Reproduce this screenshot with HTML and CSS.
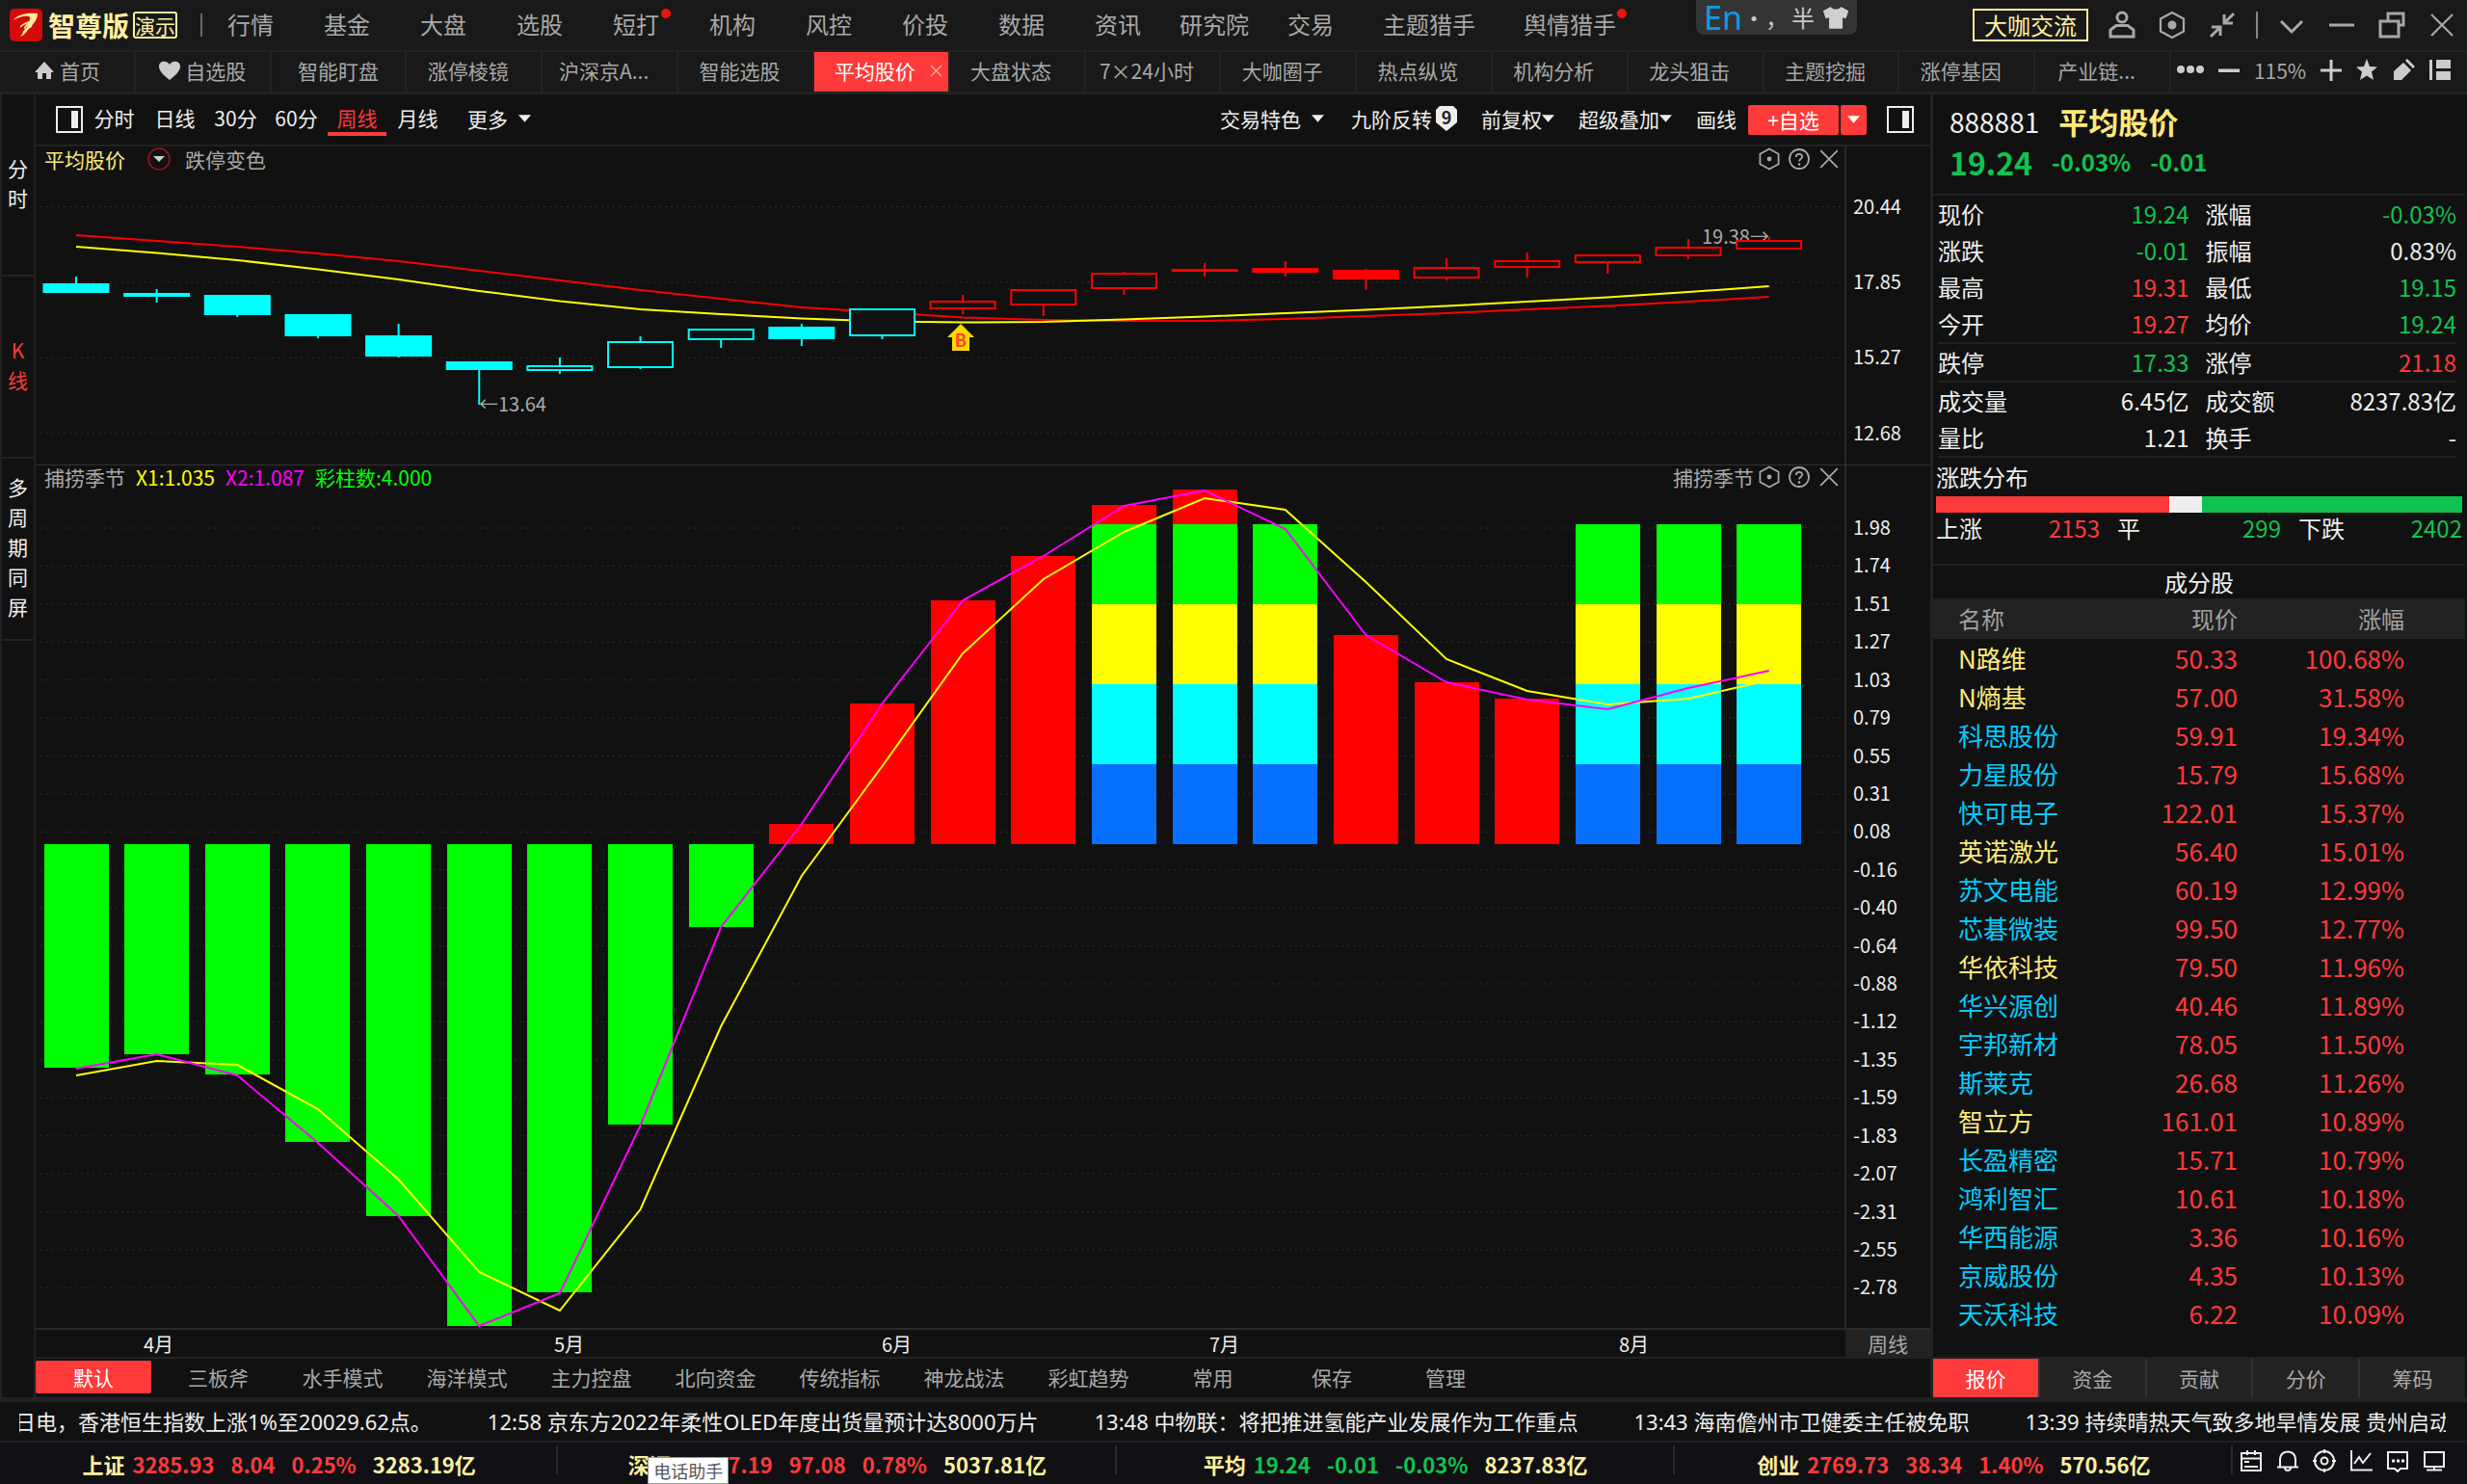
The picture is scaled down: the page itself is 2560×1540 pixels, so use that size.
FILE: index.html
```html
<!DOCTYPE html>
<html lang="zh-CN">
<head>
  <meta charset="UTF-8">
  <meta name="viewport" content="width=device-width, initial-scale=1.0">
  <title>智尊版 - 平均股价</title>
  <link rel="stylesheet" href="styles.css">
</head>
<body>
  <!-- shared icons -->
  <svg class="sprite" aria-hidden="true">
    <symbol id="i-hex" viewBox="0 0 30 30"><path d="M15 2 27 8.500V21.500L15 28 3 21.500V8.500Z" fill="none" stroke="currentColor" stroke-width="2.200"/><circle cx="15" cy="15" r="3" fill="currentColor"/></symbol>
    <symbol id="i-close" viewBox="0 0 30 30"><path d="M4 4 26 26M26 4 4 26" fill="none" stroke="currentColor" stroke-width="2.200"/></symbol>
    <symbol id="i-help" viewBox="0 0 30 30"><circle cx="15" cy="15" r="12.500" fill="none" stroke="currentColor" stroke-width="2.200"/><path d="M11 12.500c0-5 8-5 8-.5 0 3-4 3-4 6" fill="none" stroke="currentColor" stroke-width="2.200"/><circle cx="15" cy="22" r="1.600" fill="currentColor"/></symbol>
    <symbol id="i-panel" viewBox="0 0 28 28"><path d="M1 1H27V27H1Z" fill="none" stroke="currentColor" stroke-width="2"/><path d="M16 5h7v18h-7z" fill="currentColor"/></symbol>
    <symbol id="i-caret" viewBox="0 0 14 8"><path d="M0 0H14L7 8Z" fill="currentColor"/></symbol>
  </svg>

  <header class="topbar">
    <div class="brand">
      <svg class="logo" viewBox="0 0 34 34"><rect width="34" height="34" rx="5" fill="#d30b0b"/><path d="M4 12C8 6 17 4 29 5 29 11 25 16 19 22 17 25 14 28 11 29 14 25 18 20 20 14 21 11 22 9 20 8 15 7 9 9 4 12Z" fill="#ffeb9c"/><path d="M11 19c3-3 6-5 11-5-5 3-7 5-6 7M14 25c2-3 5-5 9-7" fill="none" stroke="#ffeb9c" stroke-width="1.500"/></svg>
      <span class="brand-name">智尊版</span>
      <span class="brand-tag">演示</span>
    </div>
    <nav class="nav">
      <a href="#">行情</a><a href="#">基金</a><a href="#">大盘</a><a href="#">选股</a><a href="#" class="has-dot">短打</a><a href="#">机构</a><a href="#">风控</a><a href="#">价投</a><a href="#">数据</a><a href="#">资讯</a><a href="#">研究院</a><a href="#">交易</a><a href="#">主题猎手</a><a href="#" class="has-dot">舆情猎手</a>
    </nav>
    <div class="ime">
      <span class="ime-lang">En</span><span class="ime-punct">·，</span><span>半</span>
      <svg viewBox="0 0 32 28"><path d="M10 1c2 4 10 4 12 0l9 5-3 9-4-1v13H8V14l-4 1L1 6Z" fill="#d0d0d0"/></svg>
    </div>
    <div class="window-tools">
      <button class="vip">大咖交流</button>
      <button class="win" aria-label="用户"><svg viewBox="0 0 30 30"><circle cx="15" cy="7" r="5"/><path d="M3 27V20L9 15.500H21L27 20V27Z"/></svg></button>
      <button class="win" aria-label="设置"><svg><use href="#i-hex"/></svg></button>
      <button class="win" aria-label="收起"><svg viewBox="0 0 30 30"><path d="M27 3 18 12M17 4v9h9M3 27l9-9M4 17h9v9"/></svg></button>
      <span class="win-line"></span>
      <button class="win" aria-label="展开"><svg viewBox="0 0 30 30"><path d="M4 11 15 22 26 11"/></svg></button>
      <button class="win" aria-label="最小化"><svg viewBox="0 0 30 30"><path d="M2 15H28" stroke-width="3"/></svg></button>
      <button class="win" aria-label="还原"><svg viewBox="0 0 30 30"><path d="M3 11H22V27H3ZM11 10V3H27V15H23"/></svg></button>
      <button class="win" aria-label="关闭"><svg><use href="#i-close"/></svg></button>
    </div>
  </header>

  <div class="tabbar">
    <nav class="tabs">
      <a href="#"><svg class="tab-icon" viewBox="0 0 22 20"><path d="M11 1 21 12H18V19H13V13H9V19H4V12H1Z"/></svg>首页</a>
      <a href="#"><svg class="tab-icon" viewBox="0 0 22 20"><path d="M11 20C5 15 0 11 0 6 0 0 8-1 11 4 14-1 22 0 22 6 22 11 17 15 11 20Z"/></svg>自选股</a>
      <a href="#">智能盯盘</a>
      <a href="#">涨停棱镜</a>
      <a href="#">沪深京A...</a>
      <a href="#">智能选股</a>
      <a href="#" class="active">平均股价<svg class="tab-close"><use href="#i-close"/></svg></a>
      <a href="#">大盘状态</a>
      <a href="#">7×24小时</a>
      <a href="#">大咖圈子</a>
      <a href="#">热点纵览</a>
      <a href="#">机构分析</a>
      <a href="#">龙头狙击</a>
      <a href="#">主题挖掘</a>
      <a href="#">涨停基因</a>
      <a href="#">产业链...</a>
    </nav>
    <div class="tab-tools">
      <button aria-label="更多"><svg viewBox="0 0 30 24"><circle cx="5" cy="11" r="4"/><circle cx="15" cy="11" r="4"/><circle cx="25" cy="11" r="4"/></svg></button>
      <button aria-label="缩小"><svg viewBox="0 0 22 24"><path d="M0 10.500h22v3.500H0z"/></svg></button>
      <span>115%</span>
      <button aria-label="放大"><svg viewBox="0 0 22 24"><path d="M0 10.500h9.500V1h3v9.500H22v3H12.500V23h-3V13.500H0z"/></svg></button>
      <button aria-label="收藏"><svg viewBox="0 0 24 24"><path d="M12 0 15 8 23 8.500 17 13.500 19 22 12 17.500 5 22 7 13.500 1 8.500 9 8Z"/></svg></button>
      <button aria-label="画笔"><svg viewBox="0 0 24 24"><path d="M1 22V13L11 4 19 12 9 22ZM13 2 15 0 23 8 21 10Z"/></svg></button>
      <button aria-label="布局"><svg viewBox="0 0 22 24"><path d="M0 1h3v21H0zM7 1h15v9H7zM7 13h15v9H7z"/></svg></button>
    </div>
  </div>

  <main class="workspace">
    <aside class="side">
      <a href="#">分时</a>
      <a href="#" class="active">K线</a>
      <a href="#">多周期同屏</a>
    </aside>

    <section class="charts">
      <div class="toolbar">
        <button class="panel-toggle" aria-label="左侧栏"><svg><use href="#i-panel"/></svg></button>
        <div class="periods">
          <button>分时</button><button>日线</button><button>30分</button><button>60分</button><button class="active">周线</button><button>月线</button>
        </div>
        <button class="more">更多<svg class="caret"><use href="#i-caret"/></svg></button>
        <div class="chart-actions">
          <button class="wide">交易特色<svg class="caret"><use href="#i-caret"/></svg></button>
          <button>九阶反转<svg class="shield" viewBox="0 0 22 26"><path d="M4 0H18L22 4V17L11 26 0 17V4Z" fill="#eee"/><text x="11" y="19" text-anchor="middle">9</text></svg></button>
          <button>前复权<svg class="caret"><use href="#i-caret"/></svg></button>
          <button>超级叠加<svg class="caret"><use href="#i-caret"/></svg></button>
          <button>画线</button>
        </div>
        <div class="add-group">
          <button class="add">+自选</button><button class="add-more" aria-label="选择分组"><svg class="caret"><use href="#i-caret"/></svg></button>
        </div>
        <button class="panel-toggle" aria-label="右侧栏"><svg><use href="#i-panel"/></svg></button>
      </div>

      <div class="panel">
        <svg class="plot" id="priceChart" viewBox="37 152 1966 330"></svg>
        <div class="panel-head">
          <span class="c-name">平均股价</span>
          <button class="drop" aria-label="切换"><svg viewBox="0 0 24 24"><circle cx="12" cy="12" r="11" fill="none" stroke="#a31414" stroke-width="1.500"/><path d="M6 9H18L12 15Z" fill="#ccc"/></svg></button>
          <span>跌停变色</span>
          <span class="panel-tools"><button aria-label="设置"><svg><use href="#i-hex"/></svg></button><button aria-label="帮助"><svg><use href="#i-help"/></svg></button><button aria-label="关闭"><svg><use href="#i-close"/></svg></button></span>
        </div>
      </div>

      <div class="panel indicator">
        <svg class="plot" id="indicatorChart" viewBox="37 483 1966 895"></svg>
        <div class="panel-head">
          <span>捕捞季节</span>
          <span class="c-x1">X1:1.035</span>
          <span class="c-x2">X2:1.087</span>
          <span class="c-num">彩柱数:4.000</span>
          <span class="panel-tools">捕捞季节<button aria-label="设置"><svg><use href="#i-hex"/></svg></button><button aria-label="帮助"><svg><use href="#i-help"/></svg></button><button aria-label="关闭"><svg><use href="#i-close"/></svg></button></span>
        </div>
      </div>

      <div class="dates">
        <svg id="dateAxis" viewBox="37 1380 1878 28"></svg>
        <span class="cycle">周线</span>
      </div>

      <nav class="modes">
        <a href="#" class="active">默认</a><a href="#">三板斧</a><a href="#">水手模式</a><a href="#">海洋模式</a><a href="#">主力控盘</a><a href="#">北向资金</a><a href="#">传统指标</a><a href="#">神龙战法</a><a href="#">彩虹趋势</a><a href="#">常用</a><a href="#" class="short">保存</a><a href="#" class="short">管理</a>
      </nav>
    </section>

    <section class="quote">
      <div class="quote-head">
        <div class="quote-title"><span>888881</span><h1>平均股价</h1></div>
        <div class="quote-price down"><strong>19.24</strong><b>-0.03%</b><b>-0.01</b></div>
      </div>
      <dl class="facts">
        <div><dt>现价</dt><dd class="down">19.24</dd></div><div><dt>涨幅</dt><dd class="down">-0.03%</dd></div>
        <div><dt>涨跌</dt><dd class="down">-0.01</dd></div><div><dt>振幅</dt><dd>0.83%</dd></div>
        <div><dt>最高</dt><dd class="up">19.31</dd></div><div><dt>最低</dt><dd class="down">19.15</dd></div>
        <div><dt>今开</dt><dd class="up">19.27</dd></div><div><dt>均价</dt><dd class="down">19.24</dd></div>
      </dl>
      <dl class="facts">
        <div><dt>跌停</dt><dd class="down">17.33</dd></div><div><dt>涨停</dt><dd class="up">21.18</dd></div>
      </dl>
      <dl class="facts">
        <div><dt>成交量</dt><dd>6.45亿</dd></div><div><dt>成交额</dt><dd>8237.83亿</dd></div>
        <div><dt>量比</dt><dd>1.21</dd></div><div><dt>换手</dt><dd>-</dd></div>
      </dl>
      <div class="spread">
        <h2>涨跌分布</h2>
        <div class="spread-bar"><i class="bar-up" style="flex-grow:2153"></i><i class="bar-flat" style="flex-grow:299"></i><i class="bar-down" style="flex-grow:2402"></i></div>
        <dl>
          <div><dt>上涨</dt><dd class="up">2153</dd></div>
          <div><dt>平</dt><dd class="down">299</dd></div>
          <div><dt>下跌</dt><dd class="down">2402</dd></div>
        </dl>
      </div>
      <table class="stocks">
        <caption>成分股</caption>
        <thead><tr><th>名称</th><th>现价</th><th>涨幅</th></tr></thead>
        <tbody>
          <tr><td class="hot">N路维</td><td>50.33</td><td>100.68%</td></tr>
          <tr><td class="hot">N熵基</td><td>57.00</td><td>31.58%</td></tr>
          <tr><td>科思股份</td><td>59.91</td><td>19.34%</td></tr>
          <tr><td>力星股份</td><td>15.79</td><td>15.68%</td></tr>
          <tr><td>快可电子</td><td>122.01</td><td>15.37%</td></tr>
          <tr><td class="hot">英诺激光</td><td>56.40</td><td>15.01%</td></tr>
          <tr><td>苏文电能</td><td>60.19</td><td>12.99%</td></tr>
          <tr><td>芯碁微装</td><td>99.50</td><td>12.77%</td></tr>
          <tr><td class="hot">华依科技</td><td>79.50</td><td>11.96%</td></tr>
          <tr><td>华兴源创</td><td>40.46</td><td>11.89%</td></tr>
          <tr><td>宇邦新材</td><td>78.05</td><td>11.50%</td></tr>
          <tr><td>斯莱克</td><td>26.68</td><td>11.26%</td></tr>
          <tr><td class="hot">智立方</td><td>161.01</td><td>10.89%</td></tr>
          <tr><td>长盈精密</td><td>15.71</td><td>10.79%</td></tr>
          <tr><td>鸿利智汇</td><td>10.61</td><td>10.18%</td></tr>
          <tr><td>华西能源</td><td>3.36</td><td>10.16%</td></tr>
          <tr><td>京威股份</td><td>4.35</td><td>10.13%</td></tr>
          <tr><td>天沃科技</td><td>6.22</td><td>10.09%</td></tr>
        </tbody>
      </table>
      <nav class="quote-tabs">
        <a href="#" class="active">报价</a><a href="#">资金</a><a href="#">贡献</a><a href="#">分价</a><a href="#">筹码</a>
      </nav>
    </section>
  </main>

  <div class="news">
    <div class="news-track">
      <a href="#">日电，香港恒生指数上涨1%至20029.62点。</a>
      <a href="#">12:58 京东方2022年柔性OLED年度出货量预计达8000万片</a>
      <a href="#">13:48 中物联：将把推进氢能产业发展作为工作重点</a>
      <a href="#">13:43 海南儋州市卫健委主任被免职</a>
      <a href="#">13:39 持续晴热天气致多地旱情发展 贵州启动</a>
    </div>
  </div>

  <footer class="status">
    <div class="index"><span class="idx-name">上证</span><span class="up">3285.93</span><span class="up">8.04</span><span class="up">0.25%</span><span>3283.19亿</span></div>
    <div class="index"><span class="idx-name">深证</span><span class="up">12267.19</span><span class="up">97.08</span><span class="up">0.78%</span><span>5037.81亿</span><span class="tip">电话助手</span></div>
    <div class="index"><span class="idx-name">平均</span><span class="down">19.24</span><span class="down">-0.01</span><span class="down">-0.03%</span><span>8237.83亿</span></div>
    <div class="index"><span class="idx-name">创业</span><span class="up">2769.73</span><span class="up">38.34</span><span class="up">1.40%</span><span>570.56亿</span></div>
    <div class="status-icons">
      <button aria-label="日历"><svg viewBox="0 0 24 24"><path d="M2 4H22V22H2ZM2 9.500H22M8 1V6M16 1V6M5 13H10M5 18H19"/></svg></button>
      <button aria-label="提醒"><svg viewBox="0 0 24 24"><path d="M4 18V10C4 0 20 0 20 10V18M1 18.500H23M9 19C9 23 15 23 15 19"/></svg></button>
      <button aria-label="定位"><svg viewBox="0 0 24 24"><circle cx="12" cy="12" r="10"/><circle cx="12" cy="12" r="3.500"/><path d="M12 0V4M12 20V24M0 12H4M20 12H24"/></svg></button>
      <button aria-label="走势"><svg viewBox="0 0 24 24"><path d="M2 1V21.500H24M5 15 10 8 14 14 22 4"/></svg></button>
      <button aria-label="消息"><svg viewBox="0 0 24 24"><path d="M2 3H22V20H15L12 23 9 20H2Z"/><path d="M6 12H9M11 12H14M16 12H19" stroke-width="3"/></svg></button>
      <button aria-label="屏幕"><svg viewBox="0 0 24 24"><path d="M2 3H22V18H2ZM12 18V21M4 21.500H20"/></svg></button>
    </div>
  </footer>

  <script src="script.js"></script>
</body>
</html>
```

FILE: styles.css
```css
* {
  box-sizing: border-box;
}

body {
  margin: 0;
  background-color: #111;
  color: #eee;
  font-family: "Noto Sans CJK SC", "Noto Sans", sans-serif;
  font-size: 21px;
  line-height: 30px;
  overflow: hidden;
}

a {
  color: inherit;
  text-decoration: none;
  white-space: nowrap;
}

button {
  display: flex;
  align-items: center;
  justify-content: center;
  padding: 0;
  border: 0;
  background: none;
  color: inherit;
  font: inherit;
  white-space: nowrap;
}

svg {
  display: block;
}

dl, dd, h1, h2 {
  margin: 0;
}

.sprite {
  position: absolute;
  width: 0;
  height: 0;
}

.up {
  color: #ff3a3a;
}

.down {
  color: #10c250;
}

.caret {
  width: 13px;
  height: 8px;
}

/* top bar */
.topbar {
  display: flex;
  align-items: center;
  height: 54px;
  border-bottom: 2px solid #222;
  background-color: #191919;
  color: #a8a8a8;
  font-size: 24px;
}

.brand {
  display: flex;
  align-items: center;
  width: 210px;
  padding-left: 10px;
  border-right: 2px solid #666;
  height: 24px;
  color: #fff0a0;
}

.logo {
  width: 34px;
  height: 34px;
}

.brand-name {
  margin: 0 4px 0 6px;
  font-size: 28px;
  font-weight: bold;
}

.brand-tag {
  border: 2px solid #fff0a0;
  border-radius: 3px;
  font-size: 21px;
  line-height: 24px;
}

.nav {
  display: flex;
  padding-bottom: 2px;
}

.nav a {
  position: relative;
  min-width: 100px;
  padding: 0 14px;
  text-align: center;
}

.nav a:nth-child(n+13) {
  padding: 0 25px;
}

.has-dot::after {
  content: "";
  position: absolute;
  top: -1px;
  right: 14px;
  width: 10px;
  height: 10px;
  border-radius: 50%;
  background-color: #f01010;
}

.ime {
  display: flex;
  align-items: center;
  align-self: flex-start;
  width: 167px;
  height: 36px;
  margin-left: 58px;
  padding: 0 8px;
  border-radius: 0 0 8px 8px;
  background-color: #343434;
  color: #c8c8c8;
}

.ime svg {
  width: 32px;
  margin-left: 8px;
}

.ime-lang {
  color: #0c9ce8;
  font-family: "Noto Sans", sans-serif;
  font-size: 34px;
}

.ime-punct {
  margin-right: 3px;
}

.window-tools {
  display: flex;
  align-items: center;
  margin-left: auto;
}

.vip {
  width: 120px;
  height: 34px;
  margin-right: 9px;
  border: 2px solid #fff0a0;
  color: #fff0a0;
}

.win {
  width: 52px;
  height: 40px;
}

.win svg {
  width: 30px;
  height: 30px;
  fill: none;
  stroke: currentColor;
  stroke-width: 3;
}

.win-line {
  width: 2px;
  height: 28px;
  margin: 0 9px;
  background-color: #888;
}

/* tabs */
.tabbar {
  display: flex;
  height: 44px;
  border-bottom: 3px solid #222;
  background-color: #191919;
  color: #a8a8a8;
}

.tabs {
  display: grid;
  grid-template-columns: repeat(16, 1fr);
  flex: 1;
}

.tabs a {
  display: flex;
  align-items: center;
  justify-content: center;
  padding-bottom: 3px;
  border-right: 2px solid #222;
}

.tabs a:nth-child(n+4) {
  padding-right: 12px;
}

.tabs a.active {
  justify-content: flex-start;
  gap: 14px;
  padding-left: 21px;
  padding-right: 0;
  background-color: #ff3a3a;
  color: #fff;
}

.tab-icon {
  width: 22px;
  height: 20px;
  margin-right: 5px;
  fill: #ccc;
}

.tab-close {
  width: 15px;
  height: 15px;
  color: #ffb0b0;
}

.tab-tools {
  display: flex;
  align-items: center;
  justify-content: space-between;
  width: 307px;
  padding: 0 17px 3px 5px;
}

.tab-tools svg {
  height: 24px;
  fill: #ccc;
}

/* main area */
.workspace {
  display: grid;
  grid-template-columns: 37px 1fr 554px;
  border-bottom: 5px solid #222;
}

.side {
  display: flex;
  flex-direction: column;
  border-left: 2px solid #222;
  border-right: 2px solid #222;
}

.side a {
  display: flex;
  align-items: center;
  justify-content: center;
  height: 189px;
  padding: 0 6px 4px;
  border-bottom: 2px solid #222;
  line-height: 31px;
  text-align: center;
  white-space: normal;
  word-break: break-all;
}

.side .active {
  color: #ff3a3a;
}

.charts {
  min-width: 0;
  border-right: 3px solid #222;
}

.toolbar {
  display: flex;
  align-items: center;
  height: 54px;
  padding: 0 17px 0 21px;
  border-bottom: 2px solid #222;
}

.panel-toggle svg {
  width: 28px;
  height: 28px;
}

.periods {
  display: flex;
  margin: 0 20px 0 1px;
}

.periods button {
  width: 61px;
  height: 34px;
  margin: 0 1px;
  border-bottom: 4px solid transparent;
}

.periods .active {
  border-bottom-color: #ff3a3a;
  color: #ff3a3a;
}

.more, .chart-actions button {
  padding-bottom: 2px;
}

.more, .wide {
  gap: 11px;
}

.wide {
  margin-right: 3px;
}

.chart-actions {
  display: flex;
  gap: 25px;
  margin-left: auto;
}

.shield {
  width: 22px;
  height: 26px;
  margin-left: 4px;
}

.shield text {
  fill: #222;
  font-size: 18px;
  font-weight: bold;
}

.add-group {
  display: flex;
  gap: 2px;
  margin: 0 21px 0 12px;
  color: #fff;
}

.add-group button {
  width: 94px;
  height: 31px;
  border-radius: 2px;
  background-color: #ff3a3a;
}

.add-group .add-more {
  width: 27px;
}

.panel {
  display: grid;
  color: #a8a8a8;
}

.panel > * {
  grid-area: 1 / 1;
}

.indicator {
  border-top: 1px solid #333;
}

.plot {
  width: 100%;
  height: auto;
}

.panel-head {
  display: flex;
  align-items: center;
  align-self: start;
  gap: 11px;
  height: 26px;
  margin-right: 88px;
  padding: 0 2px 0 9px;
}

.indicator .panel-head {
  height: 23px;
}

.drop {
  margin: 0 4px 0 12px;
}

.drop svg {
  width: 24px;
  height: 24px;
}

.c-name {
  color: #ffe97a;
}

.c-x1 {
  color: #ff0;
}

.c-x2 {
  color: #f0f;
}

.c-num {
  color: #0f0;
}

.panel-tools {
  display: flex;
  align-items: center;
  margin-left: auto;
}

.panel-tools button {
  width: 31px;
}

.panel-tools svg {
  width: 24px;
  height: 24px;
}

/* chart drawing */
.grid {
  stroke: #2c2c2c;
  stroke-dasharray: 2 4;
}

.axis-line {
  stroke: #2a2a2a;
  stroke-width: 2;
}

.axis-text {
  fill: #eee;
  font-size: 20px;
}

.note {
  fill: #aaa;
  font-size: 20px;
}

.line {
  fill: none;
  stroke-width: 2;
}

.dates {
  display: flex;
  border-top: 2px solid #2a2a2a;
  border-bottom: 2px solid #222;
}

.dates svg {
  flex: 1;
  min-width: 0;
}

.cycle {
  width: 88px;
  background-color: #222;
  color: #a8a8a8;
  line-height: 28px;
  text-align: center;
}

.modes {
  display: flex;
  align-items: center;
  height: 40px;
  padding-bottom: 2px;
  color: #a8a8a8;
}

.modes a {
  width: 129px;
  line-height: 34px;
  text-align: center;
}

.modes .active {
  width: 120px;
  margin-right: 5px;
  border-radius: 2px;
  background-color: #ff3a3a;
  color: #fff;
}

.modes .short {
  width: 118px;
}

/* quote panel */
.quote {
  display: flex;
  flex-direction: column;
  padding-right: 2px;
  font-size: 24px;
}

.quote-head {
  height: 105px;
  padding: 4px 0 0 17px;
  border-bottom: 2px solid #222;
}

.quote-title, .quote-price {
  display: flex;
  align-items: center;
  gap: 20px;
}

.quote-title {
  height: 48px;
  font-size: 28px;
}

.quote-title h1 {
  color: #ffe97a;
  font-size: 31px;
}

.quote-price {
  height: 36px;
}

.quote-price strong {
  font-size: 32px;
}

.facts {
  display: grid;
  grid-template-columns: 1fr 1fr;
  column-gap: 17px;
  margin: 0 9px 0 5px;
  border-bottom: 2px solid #222;
  line-height: 38px;
}

.facts div, .spread dl div {
  display: flex;
  justify-content: space-between;
}

.spread {
  height: 112px;
  padding: 2px 3px 0;
  border-bottom: 2px solid #222;
}

.spread h2 {
  margin-bottom: 2px;
  font-size: 24px;
  font-weight: normal;
  line-height: 36px;
}

.spread-bar {
  display: flex;
  height: 17px;
}

.spread-bar i {
  flex: 0 1 0;
}

.bar-up {
  background-color: #ff3a3a;
}

.bar-flat {
  background-color: #eee;
}

.bar-down {
  background-color: #10c250;
}

.spread dl {
  display: grid;
  grid-template-columns: 1fr 1fr 1fr;
  column-gap: 18px;
  line-height: 32px;
}

.stocks {
  width: 100%;
  border-collapse: collapse;
  color: #ff3a3a;
  font-size: 26px;
  line-height: 40px;
  text-align: right;
}

.stocks caption {
  color: #eee;
  font-size: 24px;
  line-height: 34px;
}

.stocks thead {
  background-color: #222;
  color: #a0a0a0;
  font-size: 24px;
  line-height: 42px;
}

.stocks th, .stocks td {
  padding: 0;
  font-weight: normal;
}

.stocks th:first-child, .stocks td:first-child {
  padding-left: 26px;
  text-align: left;
}

.stocks th:last-child, .stocks td:last-child {
  width: 236px;
  padding-right: 63px;
}

.stocks td:first-child {
  color: #00ccff;
}

.stocks td.hot {
  color: #ffe97a;
}

.quote-tabs {
  display: grid;
  grid-template-columns: repeat(5, 1fr);
  gap: 2px;
  margin-top: auto;
  border-top: 2px solid #222;
  background-color: #333;
  color: #a8a8a8;
  font-size: 21px;
  line-height: 40px;
  text-align: center;
}

.quote-tabs a {
  background-color: #222;
}

.quote-tabs .active {
  background-color: #ff3a3a;
  color: #fff;
}

/* news and status bar */
.news {
  height: 42px;
  padding: 0 22px 0 20px;
  border-bottom: 2px solid #222;
  font-family: "Noto Sans", "Noto Sans CJK SC", sans-serif;
  font-size: 22px;
  line-height: 40px;
}

.news-track {
  display: flex;
  gap: 58px;
  overflow: hidden;
}

.news-track a:first-child {
  margin-left: -5px;
}

.status {
  display: grid;
  grid-template-columns: repeat(4, 1fr) 243px;
  height: 43px;
  background-color: #111115;
  color: #fff0a0;
  font-size: 22px;
  font-weight: bold;
}

.index {
  position: relative;
  display: flex;
  align-items: center;
  justify-content: center;
  gap: 17px;
  background: linear-gradient(#2a2a2a, #2a2a2a) right 3px / 2px 30px no-repeat;
}

.idx-name {
  margin-right: -9px;
}

.tip {
  position: absolute;
  left: 93px;
  bottom: 0;
  width: 84px;
  border: 1px solid #999;
  background-color: #fff;
  color: #555;
  font-size: 18px;
  font-weight: normal;
  line-height: 26px;
  text-align: center;
}

.status-icons {
  display: flex;
  align-items: center;
  height: 38px;
}

.status-icons button {
  width: 38px;
}

.status-icons svg {
  width: 24px;
  height: 24px;
  fill: none;
  stroke: #eee;
  stroke-width: 2;
}
```

FILE: script.js
```js
const NS = 'http://www.w3.org/2000/svg';
const BG = '#111';
const firstX = 79;
const step = 83.65;

function add(parent, tag, attrs, text) {
  const el = document.createElementNS(NS, tag);
  for (const key in attrs) el.setAttribute(key, attrs[key]);
  if (text) el.textContent = text;
  parent.appendChild(el);
  return el;
}

function cx(i) {
  return firstX + i * step;
}

function drawLine(svg, ys, color) {
  const points = ys.map((y, i) => `${cx(i)},${y}`).join(' ');
  add(svg, 'polyline', { points, stroke: color, class: 'line' });
}

function drawAxis(svg, labels, y0, gap, top, bottom) {
  labels.forEach((label, i) => {
    const y = y0 + i * gap;
    add(svg, 'line', { x1: 42, x2: 1910, y1: y, y2: y, class: 'grid' });
    add(svg, 'text', { x: 1923, y: y + 7, class: 'axis-text' }, label);
  });
  add(svg, 'line', { x1: 1915, x2: 1915, y1: top, y2: bottom, class: 'axis-line' });
}

// price panel
const price = document.getElementById('priceChart');
drawAxis(price, ['20.44', '17.85', '15.27', '12.68'], 214.5, 78.4, 152, 482);

drawLine(price, [244, 250, 256, 263, 271, 281, 291, 301, 310, 319, 324, 329.5, 332, 333, 333, 331, 328, 325, 321, 317.5, 313, 308], '#f00');
drawLine(price, [256, 262.5, 270, 279.5, 290, 302, 312.5, 321, 326, 330.5, 333.5, 334.5, 334, 331.5, 328.5, 325, 321.5, 317.5, 313, 308.5, 303, 297], '#ff0');

// body top, body bottom, high, low, hollow
const candles = [
  [294, 304, 287, 304, 0], [304, 308, 300, 314, 0], [306, 327, 306, 329, 0], [326, 349, 326, 351, 0],
  [348, 370, 336, 371, 0], [375, 384, 375, 420, 0], [379, 385, 371, 388, 1], [354, 382, 349, 383, 1],
  [341, 353, 341, 361, 1], [339, 352, 336, 359, 0], [320, 349, 320, 352, 1], [312, 321, 306, 326, 1],
  [300, 317, 300, 328, 1], [283, 300, 282, 306, 1], [279, 282, 273, 287, 0], [278, 283, 271, 287, 0],
  [280, 290, 279, 301, 0], [277, 289, 268, 291, 1], [270, 278, 262, 288, 1], [264, 273, 264, 284, 1],
  [256, 266, 248, 269, 1], [249, 259, 246, 259, 1]
];

add(price, 'text', { x: 497, y: 427, class: 'note' }, '←13.64');
add(price, 'text', { x: 1766, y: 253, class: 'note' }, '19.38→');

candles.forEach(([top, bottom, high, low, hollow], i) => {
  const color = i < 11 ? '#0ff' : '#f00';
  const x = cx(i);
  add(price, 'line', { x1: x, x2: x, y1: high, y2: low, stroke: color, 'stroke-width': 2 });
  add(price, 'rect', {
    x: x - 33.5, y: top + 1, width: 67, height: bottom - top - 2,
    fill: hollow ? BG : color, stroke: color, 'stroke-width': 2
  });
});

// buy marker
add(price, 'path', { d: 'M997 336 1011 350H1006V364H988V350H983Z', fill: '#ffd800' });
add(price, 'text', { x: 997, y: 360, 'text-anchor': 'middle', 'font-size': 18, 'font-weight': 'bold', fill: '#ff4422' }, 'B');

// indicator panel
const indicator = document.getElementById('indicatorChart');
const zero = 876;
const labels = ['1.98', '1.74', '1.51', '1.27', '1.03', '0.79', '0.55', '0.31', '0.08', '-0.16', '-0.40',
  '-0.64', '-0.88', '-1.12', '-1.35', '-1.59', '-1.83', '-2.07', '-2.31', '-2.55', '-2.78'];
drawAxis(indicator, labels, 548, 39.42, 483, 1378);

const bars = [1108, 1094, 1115, 1185, 1262, 1376, 1341, 1167, 962, 855, 730, 623, 577, 524, 508, 544, 659, 708, 725, 544, 544, 544];
const stacked = [13, 14, 15, 19, 20, 21];
const stackColors = ['#0870ff', '#0ff', '#ff0', '#0f0'];

bars.forEach((y, i) => {
  const x = Math.round(cx(i) - 33.5);
  add(indicator, 'rect', {
    x, y: Math.min(y, zero), width: 67, height: Math.abs(y - zero),
    fill: y > zero ? '#0f0' : '#f00'
  });
  if (stacked.includes(i)) {
    stackColors.forEach((fill, n) => {
      add(indicator, 'rect', { x, y: zero - 83 * (n + 1), width: 67, height: 83, fill });
    });
  }
});

drawLine(indicator, [1116, 1101, 1105, 1151, 1224, 1320, 1360, 1255, 1065, 909, 795, 678, 601, 552, 517, 529, 604, 684, 717, 731, 725, 706], '#ff0');
drawLine(indicator, [1109, 1094, 1116, 1186, 1262, 1376, 1342, 1168, 962, 855, 730, 623, 577, 525, 509, 549, 659, 708, 726, 736, 714, 696], '#f0f');

// date axis
const dates = document.getElementById('dateAxis');
[[149, '4月'], [575, '5月'], [915, '6月'], [1255, '7月'], [1680, '8月']].forEach(([x, label]) => {
  add(dates, 'text', { x, y: 1403, class: 'axis-text' }, label);
});
```
